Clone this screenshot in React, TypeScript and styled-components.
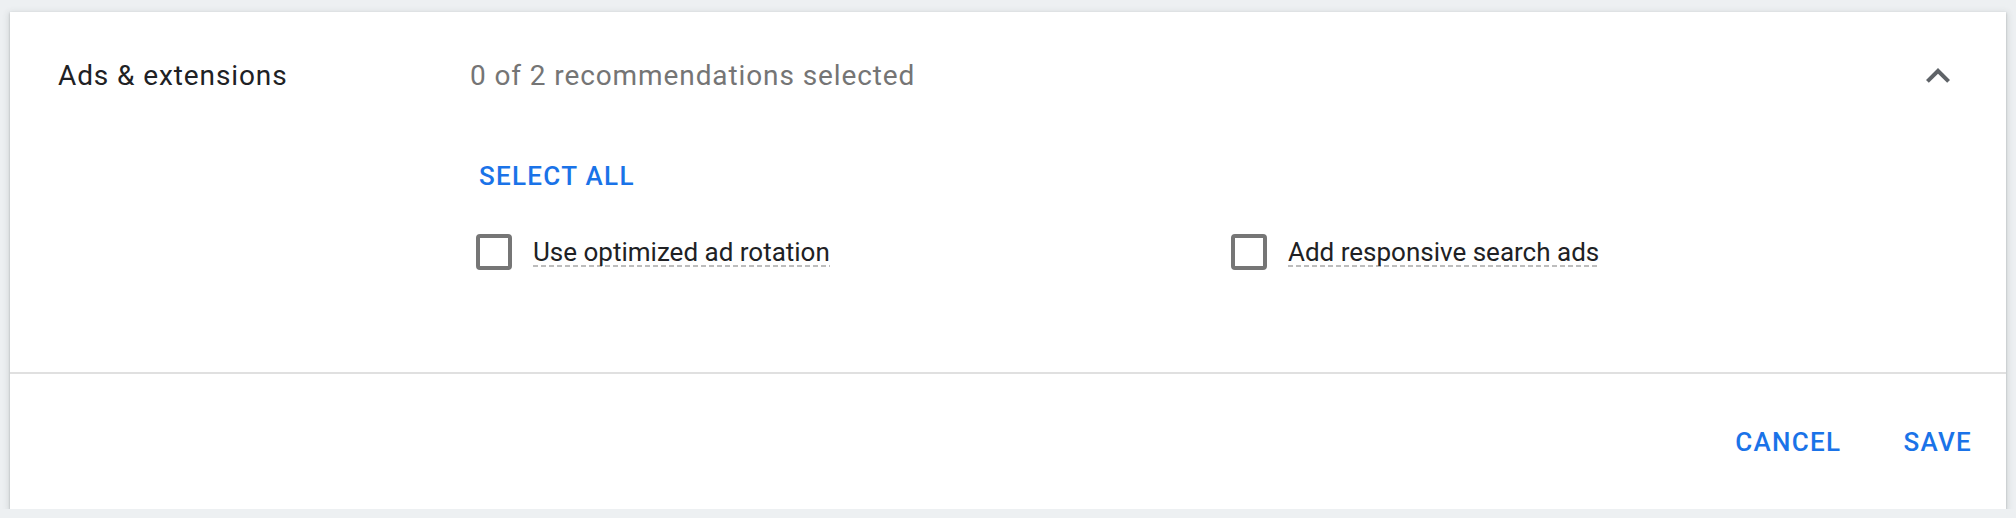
import React from "react";
import styled, { createGlobalStyle } from "styled-components";

const GlobalStyle = createGlobalStyle`
  html, body {
    margin: 0;
    padding: 0;
    background: #edf0f2;
    font-family: Roboto, "Liberation Sans", Arial, sans-serif;
  }
  body {
    padding: 12px 10px 0;
  }
`;

const Card = styled.section`
  background: #ffffff;
  box-shadow: 0 1px 2px rgba(60, 64, 67, 0.3), 0 2px 6px 2px rgba(60, 64, 67, 0.12);
`;

const Header = styled.header`
  display: flex;
  align-items: center;
  height: 126px;
  padding: 0 44px 0 48px;
`;

const Title = styled.div`
  width: 412px;
  font-size: 28px;
  letter-spacing: 0.9px;
  color: #202124;
`;

const Summary = styled.div`
  flex: 1;
  font-size: 28px;
  letter-spacing: 0.9px;
  color: #757575;
`;

const IconButton = styled.button`
  width: 48px;
  height: 48px;
  padding: 0;
  border: 0;
  background: none;
  display: flex;
  align-items: center;
  justify-content: center;
  margin-top: 2px;
  cursor: pointer;
`;

const Body = styled.div`
  padding: 2px 0 88px 460px;
  display: flex;
  flex-direction: column;
  align-items: flex-start;
  gap: 8px;
`;

const TextButton = styled.button<{ $inset?: number }>`
  height: 72px;
  padding: 0 ${(p) => p.$inset ?? 16}px;
  border: 0;
  background: none;
  font-family: Roboto, "Liberation Sans", Arial, sans-serif;
  font-weight: 500;
  font-size: 26px;
  letter-spacing: 1.3px;
  color: #1a73e8;
  text-transform: uppercase;
  cursor: pointer;
`;

const Options = styled.div`
  display: grid;
  grid-template-columns: repeat(2, 755px);
  height: 64px;
  align-items: center;
`;

const Option = styled.label`
  display: flex;
  align-items: center;
  gap: 21px;
  padding-left: 6px;
  cursor: pointer;
`;

const Box = styled.span`
  box-sizing: border-box;
  width: 36px;
  height: 36px;
  border: 4px solid #767676;
  border-radius: 4px;
  flex: none;
`;

const OptionText = styled.span`
  font-size: 26px;
  color: #202124;
  background-image: linear-gradient(to right, #bdbdbd 5px, transparent 5px);
  background-size: 8px 2px;
  background-repeat: repeat-x;
  background-position: left bottom;
`;

const Divider = styled.hr`
  margin: 0;
  border: 0;
  height: 2px;
  background: #e0e0e0;
`;

const Footer = styled.footer`
  height: 135px;
  display: flex;
  align-items: center;
  justify-content: flex-end;
  gap: 30px;
  padding-right: 18px;
`;

const options = ["Use optimized ad rotation", "Add responsive search ads"];

export default function App() {
  return (
    <>
      <GlobalStyle />
      <Card>
        <Header>
          <Title>Ads &amp; extensions</Title>
          <Summary>0 of 2 recommendations selected</Summary>
          <IconButton aria-label="Collapse">
            <svg width="48" height="48" viewBox="0 0 24 24" fill="#5f6368">
              <path d="M12 8l-6 6 1.41 1.41L12 10.83l4.59 4.58L18 14z" />
            </svg>
          </IconButton>
        </Header>
        <Body>
          <TextButton $inset={9}>Select all</TextButton>
          <Options>
            {options.map((o) => (
              <Option key={o}>
                <Box />
                <OptionText>{o}</OptionText>
              </Option>
            ))}
          </Options>
        </Body>
        <Divider />
        <Footer>
          <TextButton>Cancel</TextButton>
          <TextButton>Save</TextButton>
        </Footer>
      </Card>
    </>
  );
}
